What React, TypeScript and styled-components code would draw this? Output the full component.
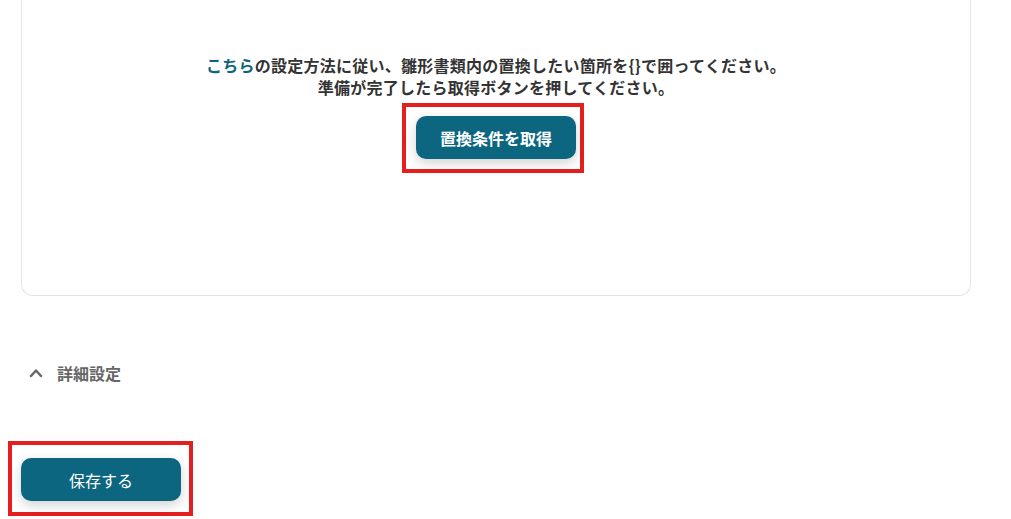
import React from 'react';
import styled, { createGlobalStyle } from 'styled-components';

const GlobalStyle = createGlobalStyle`
  html, body {
    margin: 0;
    padding: 0;
    background: #ffffff;
  }
  body {
    font-family: 'Noto Sans CJK JP', 'Noto Sans', sans-serif;
    color: #333333;
  }
`;

const Page = styled.div`
  width: 1011px;
  height: 519px;
  overflow: hidden;
  display: flex;
  flex-direction: column;
`;

const Card = styled.section`
  box-sizing: border-box;
  margin-left: 21px;
  width: 950px;
  height: 296px;
  border: 1px solid #e3e3e3;
  border-top: none;
  border-radius: 0 0 12px 12px;
  padding-top: 54px;
  display: flex;
  flex-direction: column;
  align-items: center;
`;

const Instructions = styled.p`
  margin: 0;
  font-size: 16px;
  font-weight: 700;
  line-height: 22px;
  letter-spacing: 0.25px;
  text-align: center;
  color: #333333;
`;

const Link = styled.a`
  color: #0d6680;
  text-decoration: none;
`;

const Highlight = styled.div<{ $pad: string }>`
  display: inline-flex;
  border: 4px solid #e41f1f;
  padding: ${({ $pad }) => $pad};
`;

const PrimaryButton = styled.button<{ $bold?: boolean }>`
  width: 160px;
  height: 43px;
  border: none;
  border-radius: 10px;
  background: #0d6680;
  color: #ffffff;
  font-family: inherit;
  font-size: 16px;
  font-weight: ${({ $bold }) => ($bold ? 700 : 400)};
  cursor: pointer;
  box-shadow: 0 4px 12px rgba(0, 0, 0, 0.18);
`;

const FetchArea = styled.div`
  margin-top: 5px;
  margin-right: 6px;
`;

const DetailsToggle = styled.button`
  margin: 65px 0 0 29px;
  height: 24px;
  display: flex;
  align-items: center;
  gap: 14px;
  padding: 0;
  border: none;
  background: none;
  color: #666666;
  font-family: inherit;
  font-size: 16px;
  font-weight: 700;
  cursor: pointer;

  svg {
    width: 14px;
    height: 14px;
  }
`;

const SaveArea = styled.div`
  margin: 56px 0 0 8px;
`;

export default function App() {
  return (
    <>
      <GlobalStyle />
      <Page>
        <Card>
          <Instructions>
            <Link href="#">こちら</Link>の設定方法に従い、雛形書類内の置換したい箇所を{'{}'}で囲ってください。
            <br />
            準備が完了したら取得ボタンを押してください。
          </Instructions>
          <FetchArea>
            <Highlight $pad="9px 4px 10px 10px">
              <PrimaryButton $bold>置換条件を取得</PrimaryButton>
            </Highlight>
          </FetchArea>
        </Card>
        <DetailsToggle>
          <svg viewBox="0 0 14 14" fill="none" stroke="currentColor" strokeWidth="2.4" strokeLinecap="round" strokeLinejoin="round">
            <path d="M2 10 L7 4.5 L12 10" />
          </svg>
          詳細設定
        </DetailsToggle>
        <SaveArea>
          <Highlight $pad="13px 8px 11px 9px">
            <PrimaryButton>保存する</PrimaryButton>
          </Highlight>
        </SaveArea>
      </Page>
    </>
  );
}
